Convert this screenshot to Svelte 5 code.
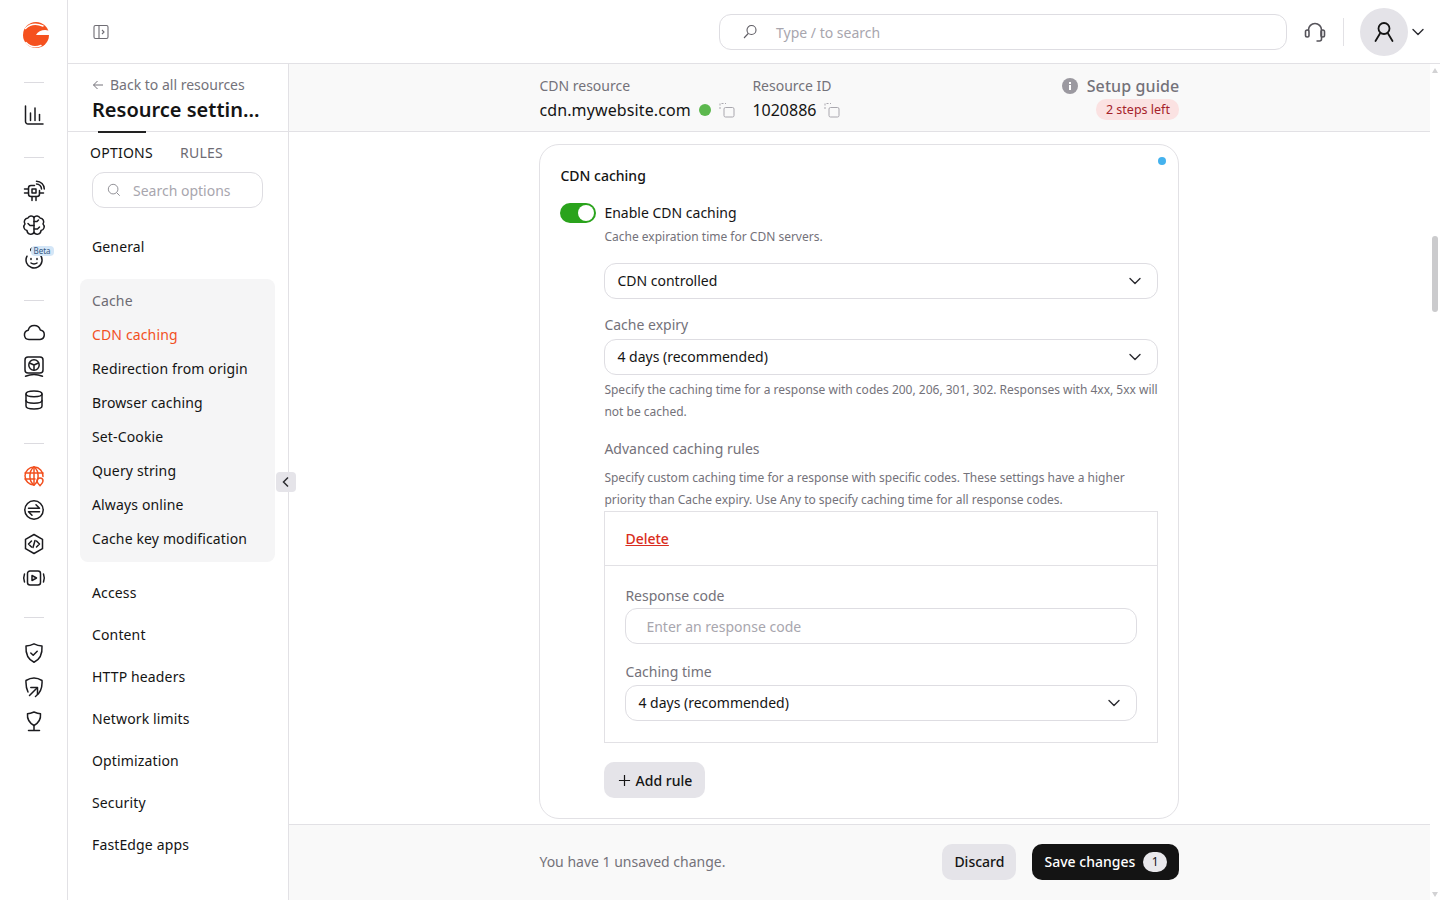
<script>
  const railGroups = [
    { cls: 'g1', items: [
      ['M3.500 3v15.500a2.500 2.500 0 0 0 2.500 2.500h15', 'M8.500 10v7.500', 'M13 5v12.500', 'M17.500 11.500v6'] ] },
    { cls: 'g2', items: [
      ['M9 6.500h3.500M17.500 11.500V15a2.500 2.500 0 0 1-2.500 2.500H9A2.500 2.500 0 0 1 6.500 15V9A2.500 2.500 0 0 1 9 6.500', 'M10 10h4v4h-4z', 'M2.500 10h4M2.500 14h4M10 17.500V21.500M14 17.500V21.500M17.500 14h4', 'M14.500 5a5 5 0 0 1 5 5', 'M14.500 2.200a7.800 7.800 0 0 1 7.800 7.800'],
      ['M12 4v16.500', 'M12 4.500A3.500 3.500 0 0 0 6 5 3.800 3.800 0 0 0 3 11a3.800 3.800 0 0 0 2 6.500 3.800 3.800 0 0 0 7 2', 'M12 4.500A3.500 3.500 0 0 1 18 5 3.800 3.800 0 0 1 21 11a3.800 3.800 0 0 1-2 6.500 3.800 3.800 0 0 1-7 2', 'M12 12.500H8l-2-2M12 16h3.500l2-2M12 8.500h3l1.500-1.500'],
      ['M12 5a8 8 0 1 1-7 4.200', 'M12 5C8.500 5 7.500 1.500 10.500 1', 'M9 11.500v1M15 11.500v1', 'M9 16c1.500 1.300 4.500 1.300 6 0']
    ] },
    { cls: 'g3', items: [
      ['M7 19.500a4.700 4.700 0 0 1-.8-9.300A6.300 6.300 0 0 1 18.300 10a4.800 4.800 0 0 1-.3 9.500z'],
      ['M6 3h12a3 3 0 0 1 3 3v10a3 3 0 0 1-3 3H6a3 3 0 0 1-3-3V6a3 3 0 0 1 3-3z', 'M12 5.800a5.200 5.200 0 1 0 0 10.400 5.200 5.200 0 0 0 0-10.400z', 'M12 11v5M12 11L7.500 9M12 11l4.500-2', 'M3.500 22.300c5-2 12-2 17 0'],
      ['M4 6c0-4 16-4 16 0v12c0 4-16 4-16 0z', 'M4 6c0 3.500 16 3.500 16 0', 'M4 12.500c0 3.500 16 3.500 16 0']
    ] },
    { cls: 'g4', items: [
      ['M21 12.500A9 9 0 1 0 12 21', 'M3 9h18M3 15h10M12 3v18', 'M12 3c-5.500 4-5.500 14 0 18M12 3c5.500 4 5.500 14 0 18', 'M18 14a3 3 0 0 1 3 3c0 2-3 4.700-3 4.700S15 19 15 17a3 3 0 0 1 3-3z'],
      ['M12 2.800a9.200 9.200 0 1 1 0 18.400 9.200 9.200 0 0 1 0-18.400z', 'M6.500 10.200h11l-3.500-3.500', 'M17.500 13.800h-11l3.500 3.500'],
      ['M12 2.500l8.500 4.800v9.400L12 21.500l-8.500-4.800V7.300z', 'M9.500 9l-3 3 3 3M14.500 9l3 3-3 3M13 8.500l-2 7'],
      ['M8 5h8a2.500 2.500 0 0 1 2.500 2.500v9A2.500 2.500 0 0 1 16 19H8a2.500 2.500 0 0 1-2.500-2.500v-9A2.500 2.500 0 0 1 8 5z', 'M2.500 8c-1 2.500-1 5.500 0 8M21.500 8c1 2.500 1 5.500 0 8', 'M10 9.500l4.500 2.500-4.500 2.500z']
    ] },
    { cls: 'g5', items: [
      ['M12 2.800c3 1.500 5 2 8 2.200.5 8-2 13.500-8 16.200C6 18.500 3.500 13 4 5c3-.2 5-.7 8-2.200z', 'M8.800 12l2.400 2.300 4-4'],
      ['M6 17C4.300 13.500 3.800 9.500 4 5.500c5-3 11-3 16 0 .5 7-1.500 12.500-6.500 16', 'M7.500 20.500l7.500-7.500', 'M8.800 12.500h6.700v6.700'],
      ['M12 3c3 1.100 4.500 1.500 6.500 1.800.5 5-2 9.200-6.500 11.700-4.500-2.500-7-6.700-6.500-11.700C7.500 4.500 9 4.100 12 3z', 'M12 16.500v5M6.500 21.500h11']
    ] }
  ];
  const cacheItems = ['CDN caching', 'Redirection from origin', 'Browser caching', 'Set-Cookie', 'Query string', 'Always online', 'Cache key modification'];
  const navItems = ['Access', 'Content', 'HTTP headers', 'Network limits', 'Optimization', 'Security', 'FastEdge apps'];
</script>

{#snippet chevron()}
  <svg class="chev" viewBox="0 0 14 14" aria-hidden="true"><path d="M2 4.500l5 5 5-5" /></svg>
{/snippet}

{#snippet copy()}
  <svg class="copy" viewBox="0 0 16 16" aria-hidden="true">
    <path class="dash" d="M1 7V1.500h6" />
    <rect x="5" y="5.500" width="10" height="9.500" rx="1.500" />
  </svg>
{/snippet}

{#snippet select(text)}
  <div class="select"><span>{text}</span>{@render chevron()}</div>
{/snippet}

<div class="app">
  <nav class="rail">
    <svg class="logo" viewBox="0 0 26 30" aria-hidden="true">
      <circle cx="13" cy="15" r="13" fill="#f5511e" />
      <path fill="#fff" d="M13 15H27V11C22 9 15.500 10 13 15z" />
      <path class="cut" stroke-width="1.500" d="M2.500 8.500C7 4 13 3 20 6" />
      <path class="cut" stroke-width="1.500" d="M3 22.500C7 27 13 27.500 18 25.500" />
    </svg>
    {#each railGroups as group, gi}
      <hr class="rule" />
      <div class="group {group.cls}">
        {#each group.items as paths, ii}
          <div class="icon" class:active={gi === 3 && ii === 0}>
            <svg viewBox="0 0 24 24" aria-hidden="true">
              {#each paths as d}<path {d} />{/each}
            </svg>
            {#if gi === 1 && ii === 2}<span class="beta">Beta</span>{/if}
          </div>
        {/each}
      </div>
    {/each}
  </nav>

  <div class="right">
    <header class="top">
      <svg class="panel" viewBox="0 0 16 16" aria-hidden="true">
        <rect x="1" y="1.500" width="14" height="13" rx="1.500" />
        <path d="M6 1.500v13M9 6l2 2-2 2" />
      </svg>
      <div class="global-search">
        <svg viewBox="0 0 16 16" aria-hidden="true"><circle cx="9.500" cy="6" r="4.500" /><path d="M6.200 9.500L2 14" /></svg>
        <span>Type / to search</span>
      </div>
      <svg class="headset" viewBox="0 0 24 24" aria-hidden="true">
        <path d="M5.500 11V10a6.500 6.500 0 0 1 13 0v9a2 2 0 0 1-2 2h-3" />
        <rect x="2.500" y="10" width="3.500" height="7" rx="1.700" />
        <rect x="18" y="10" width="3.500" height="7" rx="1.700" />
      </svg>
      <span class="vline"></span>
      <div class="avatar">
        <svg viewBox="0 0 24 24" aria-hidden="true"><circle cx="12" cy="8.500" r="5.500" /><path d="M8 13.500L3.500 21M16 13.500L20.500 21" /></svg>
      </div>
      {@render chevron()}
    </header>

    <div class="below">
      <aside class="side">
        <div class="side-head">
          <div class="back">
            <svg viewBox="0 0 12 12" aria-hidden="true"><path d="M11 6H1.500M5.500 2L1.500 6l4 4" /></svg>
            <span>Back to all resources</span>
          </div>
          <h1>Resource settin...</h1>
          <span class="tab-line"></span>
        </div>
        <div class="tabs"><span class="on">OPTIONS</span><span>RULES</span></div>
        <div class="side-search">
          <svg viewBox="0 0 16 16" aria-hidden="true"><circle cx="7" cy="7" r="5.500" /><path d="M11 11l3.500 3.500" /></svg>
          <span>Search options</span>
        </div>
        <div class="general">General</div>
        <div class="cache-group">
          <div class="cache-title">Cache</div>
          {#each cacheItems as item, i}
            <div class="cache-item" class:current={i === 0}>{item}</div>
          {/each}
        </div>
        <div class="nav-list">
          {#each navItems as item}<div class="nav-item">{item}</div>{/each}
        </div>
        <button class="collapse" aria-label="Collapse">
          <svg viewBox="0 0 12 12" aria-hidden="true"><path d="M8 1.500L3.500 6 8 10.500" /></svg>
        </button>
      </aside>

      <div class="main">
        <div class="content-col">
          <div class="bar">
            <div class="bar-inner">
              <div class="meta first">
                <div class="meta-label">CDN resource</div>
                <div class="meta-value domain">cdn.mywebsite.com<span class="live"></span>{@render copy()}</div>
              </div>
              <div class="meta">
                <div class="meta-label">Resource ID</div>
                <div class="meta-value">1020886{@render copy()}</div>
              </div>
              <div class="guide">
                <div class="guide-title">
                  <svg viewBox="0 0 16 16" aria-hidden="true"><circle cx="8" cy="8" r="8" fill="#9b99a0" /><rect x="7" y="7" width="2" height="5" fill="#fff" /><rect x="7" y="4" width="2" height="2" fill="#fff" /></svg>
                  Setup guide
                </div>
                <span class="steps">2 steps left</span>
              </div>
            </div>
          </div>

          <div class="scroll">
            <section class="card">
              <span class="dot"></span>
              <h2>CDN caching</h2>
              <div class="toggle-row">
                <span class="toggle"><span class="knob"></span></span>
                <span>Enable CDN caching</span>
              </div>
              <div class="indent">
                <p class="hint first-hint">Cache expiration time for CDN servers.</p>
                {@render select('CDN controlled')}
                <div class="label l1">Cache expiry</div>
                {@render select('4 days (recommended)')}
                <p class="hint h2">Specify the caching time for a response with codes 200, 206, 301, 302. Responses with 4xx, 5xx will not be cached.</p>
                <div class="label l2">Advanced caching rules</div>
                <p class="hint h3">Specify custom caching time for a response with specific codes. These settings have a higher priority than Cache expiry. Use Any to specify caching time for all response codes.</p>
                <div class="rule-box">
                  <div class="rule-head"><span class="delete">Delete</span></div>
                  <div class="rule-body">
                    <div class="label lr">Response code</div>
                    <div class="input">Enter an response code</div>
                    <div class="label l3">Caching time</div>
                    {@render select('4 days (recommended)')}
                  </div>
                </div>
                <button class="add">
                  <svg viewBox="0 0 14 14" aria-hidden="true"><path d="M7 1v12M1 7h12" /></svg>
                  Add rule
                </button>
              </div>
            </section>
          </div>

          <footer class="foot">
            <div class="foot-inner">
              <span class="unsaved">You have 1 unsaved change.</span>
              <button class="discard">Discard</button>
              <button class="save">Save changes <span class="count">1</span></button>
            </div>
          </footer>
        </div>

        <div class="scrollbar">
          <span class="arrow up"></span>
          <span class="thumb"></span>
          <span class="arrow down"></span>
        </div>
      </div>
    </div>
  </div>
</div>

<style>
  :global(body) {
    margin: 0;
    background: #fff;
    font-family: "Noto Sans", sans-serif;
    color: #141414;
    font-size: 14px;
    overflow: hidden;
  }
  .app { display: flex; width: 1440px; height: 900px; overflow: hidden; }
  svg { display: block; fill: none; stroke: currentColor; flex: none; }
  .rail {
    width: 67px; flex: none; border-right: 1px solid #e2e1e5;
    display: flex; flex-direction: column; align-items: center;
  }
  .logo { width: 26px; height: 30px; margin: 20px 0 32px 5px; stroke: none; overflow: hidden; }
  .logo .cut { stroke: #fff; fill: none; stroke-linecap: round; }
  .rule { width: 20px; height: 1px; border: 0; margin: 0; background: #dcdbe0; }
  .group { display: flex; flex-direction: column; gap: 10px; align-items: center; }
  .g1 { padding: 20px 0 30px; }
  .g2 { padding: 21px 0 29px; }
  .g3 { padding: 19px 0 31px; }
  .g4 { padding: 20px 0 27px; }
  .g5 { padding: 23px 0 0; }
  .icon { width: 24px; height: 24px; position: relative; display: flex; align-items: center; justify-content: center; color: #1b1b1f; }
  .icon svg { width: 24px; height: 24px; stroke-width: 1.500; stroke-linecap: round; stroke-linejoin: round; }
  .icon.active { color: #f2501f; }
  .beta {
    position: absolute; left: 9px; top: -1px; padding: 0 3px;
    background: #d4e6f7; color: #35587f; font-size: 8px; line-height: 10px; border-radius: 4px;
  }

  .right { flex: 1; min-width: 0; display: flex; flex-direction: column; }
  .top {
    height: 63px; flex: none; border-bottom: 1px solid #e2e1e5;
    display: flex; align-items: center; padding-right: 15px; color: #55535a;
  }
  .panel { width: 16px; height: 16px; margin-left: 25px; margin-top: 1px; stroke-width: 1.100; color: #6e6c73; }
  .global-search {
    margin-left: 610px; width: 567px; height: 34px; border: 1px solid #dedde2; border-radius: 12px;
    display: flex; align-items: center; margin-top: 1px; color: #a8a6ae;
  }
  .global-search svg { width: 16px; height: 16px; margin-left: 22px; color: #5f5d64; stroke-width: 1.100; }
  .global-search span { margin-left: 18px; }
  .headset { width: 24px; height: 24px; margin-left: 16px; stroke-width: 1.600; color: #55535a; }
  .vline { width: 1px; height: 28px; background: #e2e1e5; margin-left: 16px; }
  .avatar {
    width: 48px; height: 48px; border-radius: 50%; background: #e4e3e8; margin-left: 16px;
    display: flex; align-items: center; justify-content: center; color: #141414;
  }
  .avatar svg { width: 24px; height: 24px; stroke-width: 1.800; stroke-linecap: round; }
  .chev { width: 14px; height: 14px; stroke-width: 1.400; stroke-linecap: round; stroke-linejoin: round; color: #2b2b30; }
  .top > .chev { margin-left: 3px; }

  .below { flex: 1; display: flex; min-height: 0; }
  .side { width: 220px; flex: none; border-right: 1px solid #e2e1e5; position: relative; }
  .side-head { border-bottom: 1px solid #e2e1e5; padding: 11px 0 0 24px; box-sizing: border-box; height: 68px; position: relative; }
  .back { display: flex; align-items: center; color: #74727a; line-height: 19px; }
  .back svg { width: 12px; height: 12px; margin-right: 6px; stroke-width: 1; }
  h1 { margin: 0; font-size: 20px; font-weight: 600; line-height: 31px; white-space: nowrap; }
  .tab-line { position: absolute; left: 30px; bottom: -2px; width: 48px; height: 2px; background: #222; }
  .tabs { display: flex; gap: 27px; padding: 11px 0 0 22px; line-height: 19px; color: #6d6b73; letter-spacing: .25px; }
  .tabs .on { color: #141414; }
  .side-search {
    margin: 10px 0 0 24px; width: 169px; height: 34px; border: 1px solid #dedde2; border-radius: 12px;
    display: flex; align-items: center; color: #a8a6ae;
  }
  .side-search svg { width: 14px; height: 14px; margin-left: 14px; color: #8e8c93; stroke-width: 1.100; }
  .side-search span { margin-left: 12px; }
  .general { margin: 29px 0 0 24px; line-height: 20px; letter-spacing: .14px; }
  .cache-group { margin: 22px 13px 0 12px; background: #f5f5f6; border-radius: 8px; padding: 5px 12px 6px; letter-spacing: .14px; }
  .cache-title { height: 34px; line-height: 34px; color: #6d6b73; }
  .cache-item { height: 34px; line-height: 34px; }
  .cache-item.current { color: #f2501f; }
  .nav-list { margin: 10px 0 0 24px; letter-spacing: .14px; }
  .nav-item { height: 42px; line-height: 42px; }
  .collapse {
    position: absolute; left: 208px; top: 408px; width: 20px; height: 20px; padding: 0; border: 0;
    background: #e5e4e9; border-radius: 4px; display: flex; align-items: center; justify-content: center; color: #2b2b30;
  }
  .collapse svg { width: 12px; height: 12px; stroke-width: 1.500; }

  .main { flex: 1; min-width: 0; display: flex; }
  .content-col { flex: 1; min-width: 0; display: flex; flex-direction: column; }
  .bar { height: 67px; flex: none; background: #f9f9f9; border-bottom: 1px solid #e2e1e5; }
  .bar-inner { width: 640px; margin: 0 auto; display: flex; padding-top: 12px; box-sizing: border-box; }
  .meta-label { color: #74727a; line-height: 20px; }
  .meta-value { display: flex; align-items: center; font-size: 16px; line-height: 28px; color: #141414; }
  .meta-value.domain { letter-spacing: .12px; }
  .meta.first { width: 213px; }
  .live { width: 12px; height: 12px; border-radius: 50%; background: #5cb84e; margin-left: 8px; }
  .copy { width: 16px; height: 16px; margin-left: 8px; stroke-width: 1; color: #a9a7ae; }
  .copy .dash { stroke-dasharray: 2 1.500; }
  .guide { margin-left: auto; display: flex; flex-direction: column; align-items: flex-end; }
  .guide-title { display: flex; align-items: center; gap: 9px; font-size: 16px; font-weight: 500; line-height: 20px; color: #74727a; letter-spacing: .1px; }
  .guide-title svg { width: 16px; height: 16px; stroke: none; }
  .steps { margin-top: 3px; height: 21px; line-height: 21px; padding: 0 9.500px; border-radius: 10px; background: #fbe2e2; color: #a5232a; font-size: 12.500px; }

  .scroll { flex: 1; min-height: 0; overflow: hidden; display: flex; justify-content: center; padding-top: 12px; background: #fff; }
  .card {
    width: 640px; height: 675px; box-sizing: border-box; flex: none; position: relative;
    border: 1px solid #e2e1e5; border-radius: 20px; padding: 21px 20px 0;
  }
  .dot { position: absolute; right: 12px; top: 12px; width: 8px; height: 8px; background: #44b2ee; border-radius: 50%; }
  h2 { margin: 0; font-size: 14px; font-weight: 500; line-height: 20px; }
  .toggle-row { display: flex; align-items: center; gap: 8px; margin-top: 17px; line-height: 20px; }
  .toggle { width: 36px; height: 20px; border-radius: 10px; background: #2aa31c; position: relative; display: block; flex: none; }
  .knob { position: absolute; right: 2px; top: 2px; width: 16px; height: 16px; background: #fff; border-radius: 50%; }
  .indent { margin-left: 44px; }
  .hint { margin: 0; font-size: 12px; line-height: 22px; color: #74727a; }
  .first-hint { margin: 4px 0 16px; line-height: 20px; }
  .select {
    height: 36px; box-sizing: border-box; border: 1px solid #dedde2; border-radius: 12px;
    display: flex; align-items: center; justify-content: space-between; padding: 0 15px 0 12px; line-height: 20px;
  }
  .label { color: #74727a; line-height: 20px; }
  .l1 { margin: 16px 0 4px; }
  .h2 { margin-top: 4px; }
  .l2 { margin-top: 16px; }
  .h3 { margin-top: 8px; }
  .rule-box { margin-top: 0; border: 1px solid #e2e1e5; }
  .rule-head { height: 53px; border-bottom: 1px solid #e2e1e5; padding-left: 20px; display: flex; align-items: center; }
  .delete { color: #d92d20; text-decoration: underline; font-weight: 500; }
  .rule-body { padding: 20px 20px 21px; }
  .lr { margin-bottom: 2px; }
  .l3 { margin: 18px 0 3px; }
  .input {
    height: 36px; box-sizing: border-box; border: 1px solid #dedde2; border-radius: 12px;
    display: flex; align-items: center; padding-left: 20px; color: #a8a6ae;
  }
  button { font-family: inherit; font-size: 14px; cursor: pointer; }
  .add {
    margin-top: 19px; height: 36px; width: 101px; padding: 0; border: 0; border-radius: 10px; background: #e5e4e9; color: #141414;
    display: flex; align-items: center; justify-content: center; gap: 5px; font-weight: 500;
  }
  .add svg { width: 13px; height: 13px; stroke-width: 1.300; }

  .foot { height: 76px; flex: none; background: #f9f9f9; border-top: 1px solid #e2e1e5; box-sizing: border-box; }
  .foot-inner { width: 640px; height: 73px; margin: 0 auto; display: flex; align-items: center; gap: 16px; }
  .unsaved { color: #74727a; margin-right: auto; }
  .discard, .save { height: 36px; border: 0; border-radius: 10px; font-weight: 500; display: flex; align-items: center; padding: 0; }
  .discard { width: 74px; justify-content: center; background: #e5e4e9; color: #141414; }
  .save { width: 147px; justify-content: center; gap: 8px; background: #141414; color: #fff; }
  .count { width: 24px; height: 20px; border-radius: 10px; background: #e9e8ec; color: #141414; font-size: 12px; font-weight: 400; line-height: 20px; text-align: center; }

  .scrollbar { width: 10.200px; flex: none; background: #fff; display: flex; flex-direction: column; align-items: center; }
  .thumb { width: 6px; height: 76px; background: #cbcbcd; border-radius: 3px; margin-top: 163px; }
  .arrow { width: 0; height: 0; border-left: 3.500px solid transparent; border-right: 3.500px solid transparent; }
  .up { border-bottom: 5px solid #d2d2d4; margin-top: 4px; }
  .down { border-top: 5px solid #d2d2d4; margin-top: auto; margin-bottom: 3px; }
</style>
